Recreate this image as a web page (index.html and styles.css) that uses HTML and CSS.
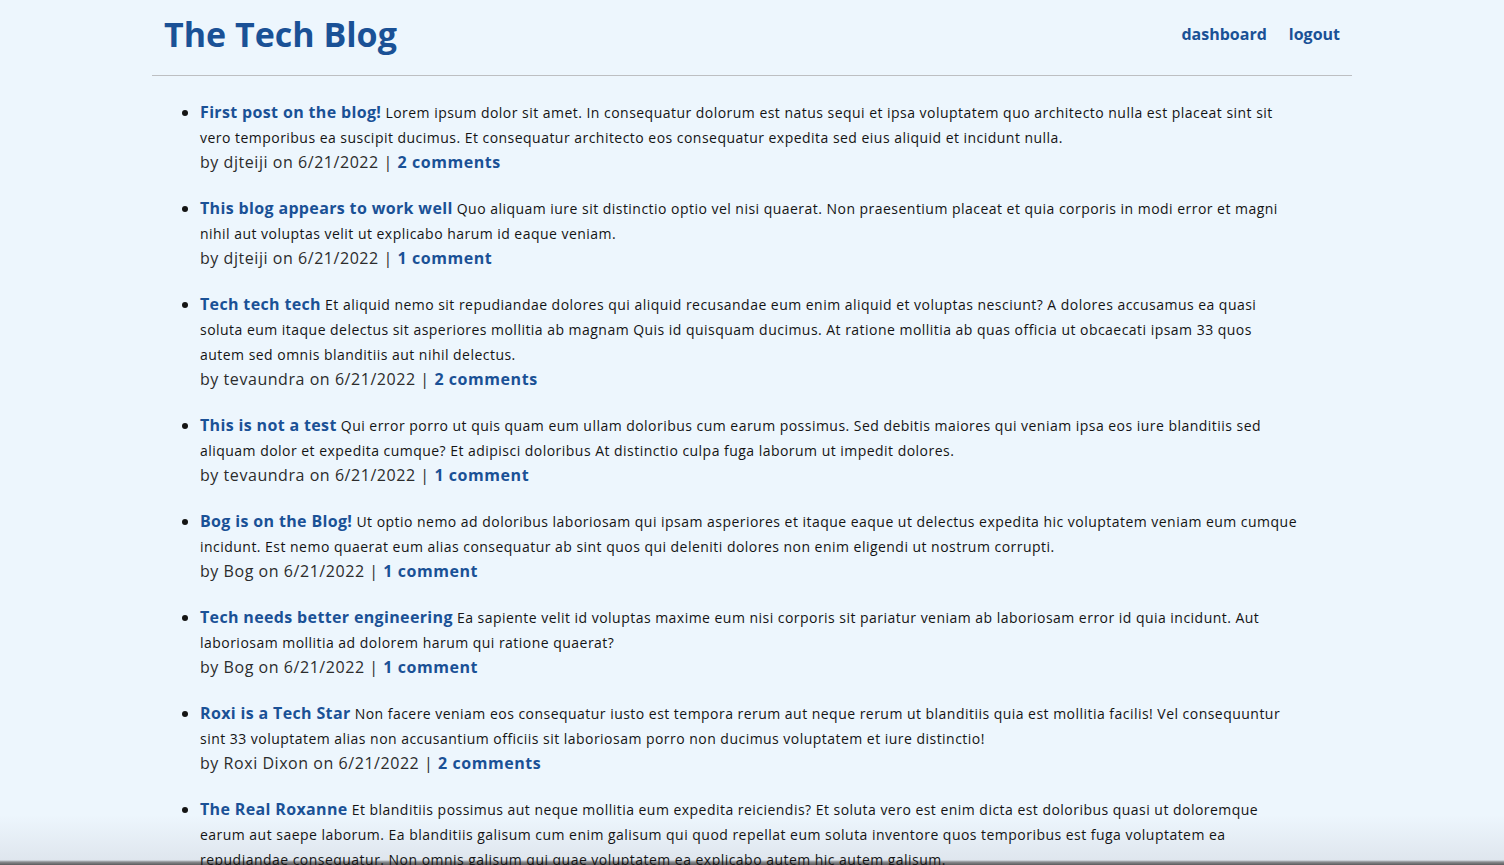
FILE: index.html
```html
<!DOCTYPE html>
<html lang="en">
<head>
<meta charset="utf-8">
<title>The Tech Blog</title>
<link rel="stylesheet" href="styles.css">
</head>
<body>
<div class="page">
  <header class="site-header">
    <h1 class="site-title">The Tech Blog</h1>
    <nav class="site-nav">
      <a href="#">dashboard</a>
      <a href="#">logout</a>
    </nav>
  </header>
  <main class="posts">
    <ul class="post-list">
      <li class="post">
        <p class="post-body"><a class="post-title" href="#">First post on the blog!</a> Lorem ipsum dolor sit amet. In consequatur dolorum est natus sequi et ipsa voluptatem quo architecto nulla est placeat sint sit vero temporibus ea suscipit ducimus. Et consequatur architecto eos consequatur expedita sed eius aliquid et incidunt nulla.</p>
        <p class="post-meta">by djteiji on 6/21/2022 | <a href="#">2 comments</a></p>
      </li>
      <li class="post">
        <p class="post-body"><a class="post-title" href="#">This blog appears to work well</a> Quo aliquam iure sit distinctio optio vel nisi quaerat. Non praesentium placeat et quia corporis in modi error et magni nihil aut voluptas velit ut explicabo harum id eaque veniam.</p>
        <p class="post-meta">by djteiji on 6/21/2022 | <a href="#">1 comment</a></p>
      </li>
      <li class="post">
        <p class="post-body"><a class="post-title" href="#">Tech tech tech</a> Et aliquid nemo sit repudiandae dolores qui aliquid recusandae eum enim aliquid et voluptas nesciunt? A dolores accusamus ea quasi soluta eum itaque delectus sit asperiores mollitia ab magnam Quis id quisquam ducimus. At ratione mollitia ab quas officia ut obcaecati ipsam 33 quos autem sed omnis blanditiis aut nihil delectus.</p>
        <p class="post-meta">by tevaundra on 6/21/2022 | <a href="#">2 comments</a></p>
      </li>
      <li class="post">
        <p class="post-body"><a class="post-title" href="#">This is not a test</a> Qui error porro ut quis quam eum ullam doloribus cum earum possimus. Sed debitis maiores qui veniam ipsa eos iure blanditiis sed aliquam dolor et expedita cumque? Et adipisci doloribus At distinctio culpa fuga laborum ut impedit dolores.</p>
        <p class="post-meta">by tevaundra on 6/21/2022 | <a href="#">1 comment</a></p>
      </li>
      <li class="post">
        <p class="post-body"><a class="post-title" href="#">Bog is on the Blog!</a> Ut optio nemo ad doloribus laboriosam qui ipsam asperiores et itaque eaque ut delectus expedita hic voluptatem veniam eum cumque incidunt. Est nemo quaerat eum alias consequatur ab sint quos qui deleniti dolores non enim eligendi ut nostrum corrupti.</p>
        <p class="post-meta">by Bog on 6/21/2022 | <a href="#">1 comment</a></p>
      </li>
      <li class="post">
        <p class="post-body"><a class="post-title" href="#">Tech needs better engineering</a> Ea sapiente velit id voluptas maxime eum nisi corporis sit pariatur veniam ab laboriosam error id quia incidunt. Aut laboriosam mollitia ad dolorem harum qui ratione quaerat?</p>
        <p class="post-meta">by Bog on 6/21/2022 | <a href="#">1 comment</a></p>
      </li>
      <li class="post">
        <p class="post-body"><a class="post-title" href="#">Roxi is a Tech Star</a> Non facere veniam eos consequatur iusto est tempora rerum aut neque rerum ut blanditiis quia est mollitia facilis! Vel consequuntur sint 33 voluptatem alias non accusantium officiis sit laboriosam porro non ducimus voluptatem et iure distinctio!</p>
        <p class="post-meta">by Roxi Dixon on 6/21/2022 | <a href="#">2 comments</a></p>
      </li>
      <li class="post">
        <p class="post-body"><a class="post-title" href="#">The Real Roxanne</a> Et blanditiis possimus aut neque mollitia eum expedita reiciendis? Et soluta vero est enim dicta est doloribus quasi ut doloremque earum aut saepe laborum. Ea blanditiis galisum cum enim galisum qui quod repellat eum soluta inventore quos temporibus est fuga voluptatem ea repudiandae consequatur. Non omnis galisum qui quae voluptatem ea explicabo autem hic autem galisum.</p>
        <p class="post-meta">by Roxi on 6/21/2022 | <a href="#">0 comments</a></p>
      </li>
    </ul>
  </main>
</div>
</body>
</html>
```

FILE: styles.css
```css
html, body {
  margin: 0;
  padding: 0;
}
html {
  height: 865px;
  overflow: hidden;
  background: linear-gradient(to bottom, #edf6fd 0, #edf6fd 815px, #dfe6ee 860px, #8a8c8f 862px, #5a5a5c 865px);
}
body {
  height: 865px;
  overflow: hidden;
  font-family: "Open Sans", "DejaVu Sans", sans-serif;
  color: #141414;
}
a {
  color: #1a5196;
  text-decoration: none;
  font-weight: bold;
}
.page {
  width: 1200px;
  margin: 0 auto;
}
.site-header {
  display: flex;
  justify-content: space-between;
  align-items: center;
  height: 75px;
  padding: 0 12px;
  border-bottom: 1px solid #bdbfc2;
}
.site-title {
  margin: 0;
  font-size: 34px;
  color: #1a5196;
  font-weight: bold;
  padding-bottom: 8px;
}
.site-nav {
  display: flex;
  gap: 22px;
  font-size: 16px;
  padding-bottom: 8px;
}
.post-list {
  margin: 0;
  padding: 24px 53px 0 48px;
}
.post {
  margin-bottom: 22px;
}
.post-body {
  margin: 0;
  font-size: 14px;
  line-height: 25px;
  letter-spacing: 0.47px;
}
.post-title {
  font-size: 16px;
  letter-spacing: 0.35px;
}
.post-meta {
  margin: 0;
  font-size: 16px;
  line-height: 24px;
  color: #2c2c2c;
  letter-spacing: 0.55px;
}
```
